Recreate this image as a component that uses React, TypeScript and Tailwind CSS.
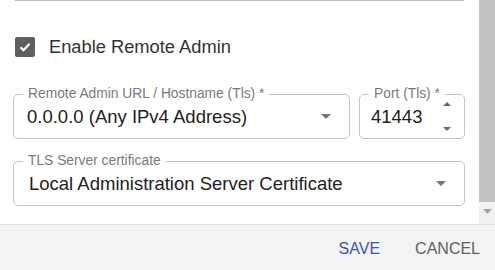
import type { ReactNode } from "react";

function DropArrow() {
  return (
    <svg width="10" height="5" viewBox="0 0 10 5" className="shrink-0">
      <path d="M0 0h10L5 5z" fill="#757575" />
    </svg>
  );
}

function Outlined({
  label,
  className,
  children,
}: {
  label: string;
  className: string;
  children: ReactNode;
}) {
  return (
    <div className={`relative flex h-[45px] items-center rounded-[5px] border border-[#c4c4c4] ${className}`}>
      <span className="absolute left-[9px] top-[-9px] bg-white px-[5px] text-[13.8px] leading-[16px] text-[#7a7a7a]">
        {label}
      </span>
      {children}
    </div>
  );
}

export default function App() {
  return (
    <div className="flex h-[270px] w-[495px] flex-col overflow-hidden bg-white font-['Liberation_Sans',Arial,sans-serif]">
      <div className="flex h-[224px]">
        <div className="flex flex-1 flex-col pl-[13px] pr-[14px]">
          <div className="ml-[2px] mr-px h-px bg-[#bdbdbd]" />

          <label className="mt-[36px] flex h-[20px] items-center gap-[14px] pl-[2px]">
            <span className="flex h-[20px] w-[20px] items-center justify-center rounded-[2px] bg-[#5f5f5f]">
              <svg width="14" height="14" viewBox="0 0 14 14">
                <path d="M2.5 7.2l3 3L11.6 3.8" fill="none" stroke="white" strokeWidth="2.2" />
              </svg>
            </span>
            <span className="text-[18.3px] text-[#333]">Enable Remote Admin</span>
          </label>

          <div className="mt-[37px] flex gap-[9px]">
            <Outlined label="Remote Admin URL / Hostname (Tls) *" className="w-[337px] pl-[13px] pr-[18px]">
              <span className="flex-1 text-[18.5px] text-[#222]">0.0.0.0 (Any IPv4 Address)</span>
              <DropArrow />
            </Outlined>
            <Outlined label="Port (Tls) *" className="w-[106px] pl-[11px] pr-[13px]">
              <span className="flex-1 text-[18.5px] text-[#222]">41443</span>
              <div className="flex h-full flex-col justify-between py-[7px]">
                <svg width="8" height="4" viewBox="0 0 8 4">
                  <path d="M0 4h8L4 0z" fill="#6b6b6b" />
                </svg>
                <svg width="8" height="4" viewBox="0 0 8 4">
                  <path d="M0 0h8L4 4z" fill="#6b6b6b" />
                </svg>
              </div>
            </Outlined>
          </div>

          <Outlined label="TLS Server certificate" className="mt-[22px] w-[452px] pl-[15px] pr-[18px]">
            <span className="flex-1 text-[18.5px] text-[#222]">Local Administration Server Certificate</span>
            <DropArrow />
          </Outlined>
        </div>

        <div className="flex w-[16px] flex-col items-center bg-[#f1f1f1]">
          <div className="h-[202px] w-full bg-[#c1c1c1]" />
          <svg width="9" height="5" viewBox="0 0 9 5" className="mt-[7px]">
            <path d="M0 0h9L4.5 5z" fill="#a3a3a3" />
          </svg>
        </div>
      </div>

      <div className="flex flex-1 items-center justify-end gap-[35px] border-t border-[#e0e0e0] bg-[#f4f4f4] pr-[15px] pt-[3px] text-[16px]">
        <button className="text-[#3f51b5]">SAVE</button>
        <button className="text-[#616161]">CANCEL</button>
      </div>
    </div>
  );
}
